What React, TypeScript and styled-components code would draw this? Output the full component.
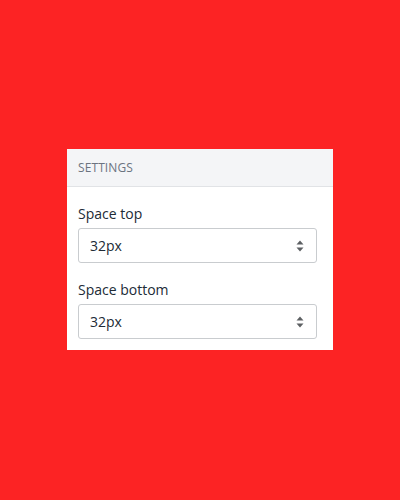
import * as React from 'react'
import styled, { createGlobalStyle } from 'styled-components'

const GlobalStyle = createGlobalStyle`
  html, body {
    margin: 0;
    padding: 0;
    background: #fc2324;
  }
  body {
    font-family: 'Open Sans', 'Noto Sans', sans-serif;
  }
`

const Page = styled.div`
  width: 400px;
  height: 500px;
  display: flex;
  align-items: flex-start;
  justify-content: center;
  padding-top: 149px;
  box-sizing: border-box;
`

const Panel = styled.div`
  width: 266px;
  background: #ffffff;
`

const Header = styled.div`
  height: 37px;
  background: #f4f5f7;
  border-bottom: 1px solid #e1e3e6;
  padding: 0 11px;
  display: flex;
  align-items: center;
  font-size: 12px;
  letter-spacing: 0.1px;
  color: #6b7380;
  text-transform: uppercase;
`

const Body = styled.div`
  padding: 17px 16px 11px 11px;
  display: flex;
  flex-direction: column;
  gap: 17px;
`

const Field = styled.div`
  display: flex;
  flex-direction: column;
  gap: 4px;
`

const Label = styled.label`
  font-size: 14px;
  line-height: 20px;
  color: #212b36;
`

const SelectBox = styled.div`
  height: 35px;
  box-sizing: border-box;
  border: 1px solid #c9cccf;
  border-radius: 3px;
  display: flex;
  align-items: center;
  padding: 0 11px;
  font-size: 14px;
  color: #212b36;
  background: #fff;
`

const Value = styled.span`
  flex: 1;
`

const Arrows = styled.svg`
  width: 8px;
  height: 12px;
  margin-right: 1px;
`

type SelectProps = Readonly<{ value: string }>

const Select = ({ value }: SelectProps) => (
  <SelectBox>
    <Value>{value}</Value>
    <Arrows viewBox="0 0 8 12">
      <path d="M4 0.5 L7.5 4.5 H0.5 Z" fill="#5c5f62" />
      <path d="M0.5 7.5 H7.5 L4 11.5 Z" fill="#5c5f62" />
    </Arrows>
  </SelectBox>
)

export default function App() {
  return (
    <>
      <GlobalStyle />
      <Page>
        <Panel>
          <Header>Settings</Header>
          <Body>
            <Field>
              <Label>Space top</Label>
              <Select value="32px" />
            </Field>
            <Field>
              <Label>Space bottom</Label>
              <Select value="32px" />
            </Field>
          </Body>
        </Panel>
      </Page>
    </>
  )
}
